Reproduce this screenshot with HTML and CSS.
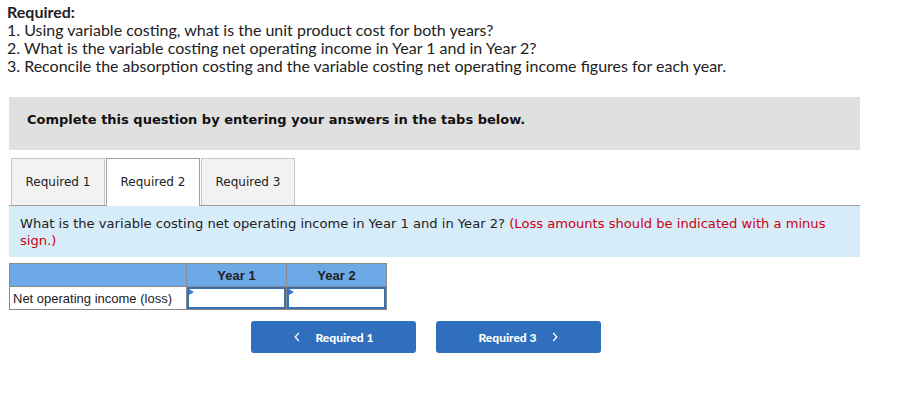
FILE: index.html
```html
<!DOCTYPE html>
<html lang="en">
<head>
    <meta charset="UTF-8">
    <title>Required 2</title>
    <link rel="stylesheet" href="styles.css">
</head>
<body>
    <div class="required">
        <strong>Required:</strong>
        <p>1. Using variable costing, what is the unit product cost for both years?</p>
        <p>2. What is the variable costing net operating income in Year 1 and in Year 2?</p>
        <p>3. Reconcile the absorption costing and the variable costing net operating income figures for each year.</p>
    </div>

    <div class="notice">Complete this question by entering your answers in the tabs below.</div>

    <div class="tabs">
        <div class="tab">Required 1</div>
        <div class="tab active">Required 2</div>
        <div class="tab">Required 3</div>
    </div>

    <div class="panel">
        What is the variable costing net operating income in Year 1 and in Year 2? <span class="warn">(Loss amounts should be indicated with a minus</span> <span class="warn">sign.)</span>
    </div>

    <table class="answers">
        <tr>
            <th></th>
            <th>Year 1</th>
            <th>Year 2</th>
        </tr>
        <tr>
            <td class="label">Net operating income (loss)</td>
            <td class="cell"><input type="text"></td>
            <td class="cell"><input type="text"></td>
        </tr>
    </table>

    <div class="nav">
        <button class="nav-btn">
            <svg width="8" height="12" viewBox="0 0 8 12"><path d="M5.8 2L2.2 6L5.8 10" fill="none" stroke="#fff" stroke-width="1.3"/></svg>
            <span>Required 1</span>
        </button>
        <button class="nav-btn">
            <span>Required 3</span>
            <svg width="8" height="12" viewBox="0 0 8 12"><path d="M2.2 2L5.8 6L2.2 10" fill="none" stroke="#fff" stroke-width="1.3"/></svg>
        </button>
    </div>
</body>
</html>
```

FILE: styles.css
```css
body {
    margin: 0;
    padding: 3px 0 0 7px;
    font-family: Lato, "Liberation Sans", sans-serif;
    color: #222;
    background: #fff;
}

.required {
    font-size: 16px;
    line-height: 18px;
}

.required p {
    margin: 0;
}

.notice {
    margin: 22px 0 0 2px;
    width: 833px;
    height: 53px;
    padding-left: 18px;
    background: #e0e0e0;
    font-family: Verdana, "DejaVu Sans", sans-serif;
    font-size: 13px;
    font-weight: bold;
    line-height: 45px;
    color: #111;
}

.tabs {
    display: flex;
    gap: 1px;
    margin: 8px 0 0 4px;
}

.tab {
    width: 92px;
    height: 46px;
    border: 1px solid #c6c6c6;
    border-bottom: none;
    background: #f2f2f2;
    font-family: Verdana, "DejaVu Sans", sans-serif;
    font-size: 12px;
    line-height: 46px;
    text-align: center;
    color: #222;
}

.tab.active {
    background: #fff;
    border-color: #a0a0a0;
    position: relative;
    z-index: 1;
    height: 47px;
    margin-bottom: -1px;
}

.panel {
    margin-left: 2px;
    width: 840px;
    padding: 9px 0 8px 11px;
    border-top: 1px solid #a0a0a0;
    background: #d7ecf9;
    font-family: Verdana, "DejaVu Sans", sans-serif;
    font-size: 13.1px;
    line-height: 17px;
    color: #222;
}

.warn {
    color: #cc0011;
}

.answers {
    margin: 6px 0 0 2px;
    border-collapse: collapse;
    font-family: Arial, "Liberation Sans", sans-serif;
    font-size: 13px;
}

.answers th {
    background: #6da9e6;
    border: 1px solid #8a8a8a;
    height: 22px;
    padding: 0;
    font-weight: bold;
    color: #222;
}

.answers th:first-child {
    width: 176px;
}

.answers th + th {
    width: 99px;
}

.answers td {
    border: 1px solid #8a8a8a;
    height: 22px;
    padding: 0;
}

.label {
    padding-left: 3px !important;
    color: #222;
}

.cell {
    position: relative;
}

.cell input {
    display: block;
    width: 100%;
    height: 22px;
    box-sizing: border-box;
    border: 2px solid #3a6fb0;
    margin: 0;
}

.cell::before {
    content: "";
    position: absolute;
    top: 2px;
    left: 2px;
    border-left: 5px solid #3a7fd4;
    border-top: 3px solid transparent;
    border-bottom: 3px solid transparent;
}

.nav {
    display: flex;
    gap: 20px;
    margin: 11px 0 0 244px;
}

.nav-btn {
    width: 165px;
    height: 32px;
    display: flex;
    align-items: center;
    justify-content: center;
    gap: 14px;
    border: none;
    border-radius: 3px;
    background: #2f6fbd;
    color: #fff;
    font-family: Lato, "Liberation Sans", sans-serif;
    font-size: 12px;
    font-weight: 900;
}
```
